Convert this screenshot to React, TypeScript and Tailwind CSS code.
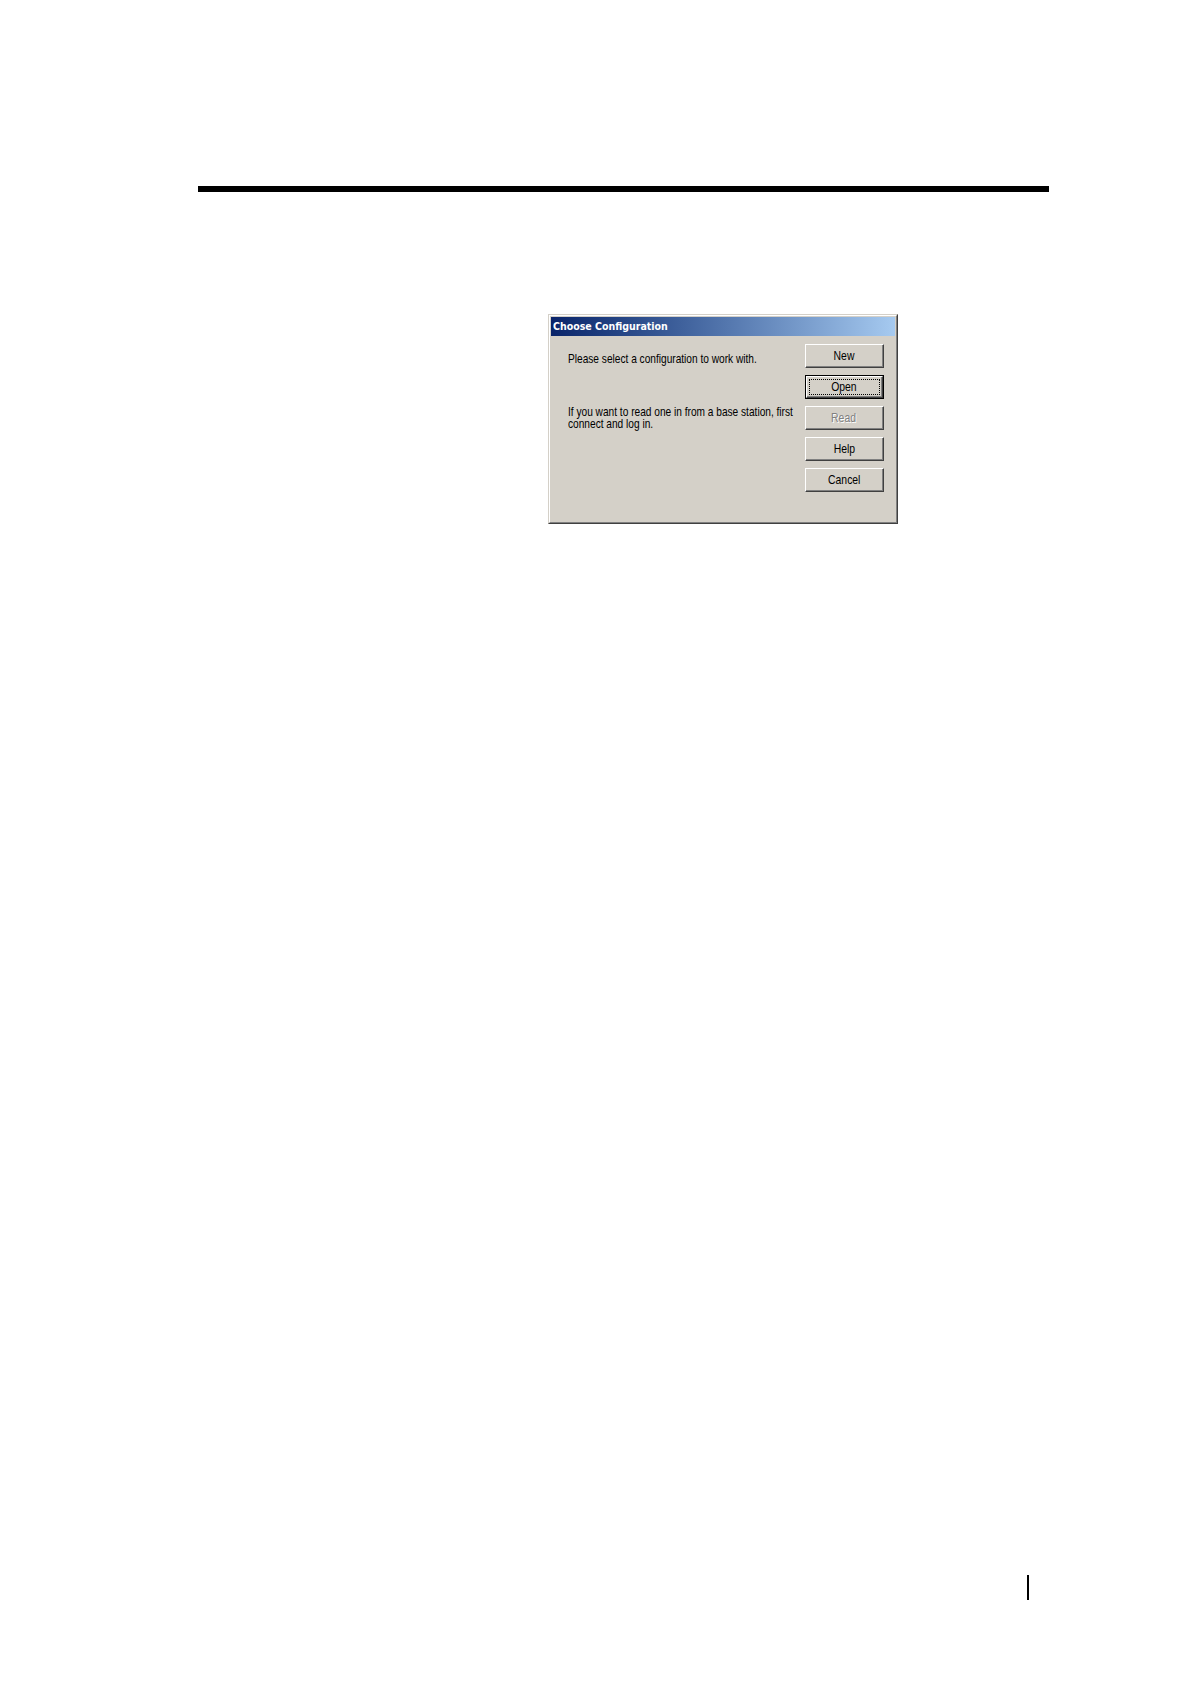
const sans = "font-['Liberation_Sans',Arial,sans-serif]";

const WinButton = ({
  label,
  isDefault = false,
  disabled = false,
}: {
  label: string;
  isDefault?: boolean;
  disabled?: boolean;
}) => {
  const inner = (
    <div className="h-full w-full border-t border-l border-t-white border-l-white border-b border-r border-b-[#404040] border-r-[#404040]">
      <div className="h-full w-full border-b border-r border-b-[#808080] border-r-[#808080] flex items-center justify-center">
        <span
          className={`${sans} text-[13px] leading-[14px] inline-block scale-x-[0.8] ${
            disabled ? "text-[#808080] [text-shadow:1px_1px_0_#ffffff]" : "text-black"
          }`}
        >
          {label}
        </span>
      </div>
    </div>
  );

  if (isDefault) {
    return (
      <div className="h-[24px] w-[79px] border border-black bg-[#d4d0c8] relative">
        {inner}
        <div className="absolute inset-[3px] border border-dotted border-black pointer-events-none" />
      </div>
    );
  }

  return <div className="h-[24px] w-[79px] bg-[#d4d0c8]">{inner}</div>;
};

const ChooseConfiguration = () => {
  return (
    <div className="w-[350px] border border-t-[#d4d0c8] border-l-[#d4d0c8] border-b-[#404040] border-r-[#404040] bg-[#d4d0c8]">
      <div className="border border-t-white border-l-white border-b-[#808080] border-r-[#808080] p-[1px]">
        {/* title bar */}
        <div className="h-[19px] bg-gradient-to-r from-[#0a246a] to-[#a6caf0] flex items-center pl-[2px]">
          <span className="font-['DejaVu_Sans',Verdana,sans-serif] font-bold text-[11px] text-white leading-none inline-block origin-left scale-x-[0.86] whitespace-nowrap">
            Choose Configuration
          </span>
        </div>
        {/* body */}
        <div className="flex pl-[17px] pr-[11px] pb-[29px]">
          <div className={`w-[237px] pt-[17px] ${sans} text-[13px] leading-[12px] text-black`}>
            <p className="origin-left scale-x-[0.78] whitespace-nowrap">
              Please select a configuration to work with.
            </p>
            <p className="mt-[41px] origin-left scale-x-[0.78] whitespace-nowrap">
              If you want to read one in from a base station, first
              <br />
              connect and log in.
            </p>
          </div>
          <div className="flex flex-col gap-[7px] pt-[8px]">
            <WinButton label="New" />
            <WinButton label="Open" isDefault />
            <WinButton label="Read" disabled />
            <WinButton label="Help" />
            <WinButton label="Cancel" />
          </div>
        </div>
      </div>
    </div>
  );
};

const App = () => {
  return (
    <div className="w-[1190px] h-[1684px] bg-white flex flex-col">
      <div className="mt-[186px] ml-[198px] w-[851px] h-[6px] bg-black" />
      <div className="mt-[122px] ml-[548px]">
        <ChooseConfiguration />
      </div>
      <div className="mt-[1051px] ml-[1027px] w-[2px] h-[25px] bg-black" />
    </div>
  );
};

export default App;
